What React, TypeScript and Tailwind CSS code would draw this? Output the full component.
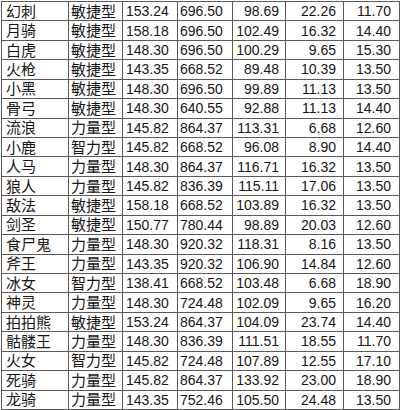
const ROWS: string[][] = [
  ['幻刺', '敏捷型', '153.24', '696.50', '98.69', '22.26', '11.70'],
  ['月骑', '敏捷型', '158.18', '696.50', '102.49', '16.32', '14.40'],
  ['白虎', '敏捷型', '148.30', '696.50', '100.29', '9.65', '15.30'],
  ['火枪', '敏捷型', '143.35', '668.52', '89.48', '10.39', '13.50'],
  ['小黑', '敏捷型', '148.30', '696.50', '99.89', '11.13', '13.50'],
  ['骨弓', '敏捷型', '148.30', '640.55', '92.88', '11.13', '14.40'],
  ['流浪', '力量型', '145.82', '864.37', '113.31', '6.68', '12.60'],
  ['小鹿', '智力型', '145.82', '668.52', '96.08', '8.90', '14.40'],
  ['人马', '力量型', '148.30', '864.37', '116.71', '16.32', '13.50'],
  ['狼人', '力量型', '145.82', '836.39', '115.11', '17.06', '13.50'],
  ['敌法', '敏捷型', '158.18', '668.52', '103.89', '16.32', '13.50'],
  ['剑圣', '敏捷型', '150.77', '780.44', '98.89', '20.03', '12.60'],
  ['食尸鬼', '力量型', '148.30', '920.32', '118.31', '8.16', '13.50'],
  ['斧王', '力量型', '143.35', '920.32', '106.90', '14.84', '12.60'],
  ['冰女', '智力型', '138.41', '668.52', '103.48', '6.68', '18.90'],
  ['神灵', '力量型', '148.30', '724.48', '102.09', '9.65', '16.20'],
  ['拍拍熊', '敏捷型', '153.24', '864.37', '104.09', '23.74', '14.40'],
  ['骷髅王', '力量型', '148.30', '836.39', '111.51', '18.55', '11.70'],
  ['火女', '智力型', '145.82', '724.48', '107.89', '12.55', '17.10'],
  ['死骑', '力量型', '145.82', '864.37', '133.92', '23.00', '18.90'],
  ['龙骑', '力量型', '143.35', '752.46', '105.50', '24.48', '13.50'],
]

// per-column alignment/padding, like the spreadsheet it came from
const CELL = [
  'justify-start pl-[4px] text-[15px]',
  'justify-start pl-[2px] text-[15px]',
  'justify-start pl-[3px] text-[14px]',
  'justify-start pl-[2px] text-[14px]',
  'justify-end pr-[6px] text-[14px]',
  'justify-end pr-[7px] text-[14px]',
  'justify-end pr-[8px] text-[14px]',
]

export default function App() {
  return (
    <div className="w-[400px] h-[410px] overflow-hidden bg-white">
      <div
        className="ml-px mt-px h-[409px] w-[399px] grid gap-px p-px bg-[#5a5a5a] grid-cols-[66px_53px_54px_54px_52px_57px_55px] grid-rows-[repeat(21,minmax(0,1fr))]"
        style={{ fontFamily: '"Liberation Sans", "Noto Sans CJK SC", sans-serif' }}
      >
        {ROWS.map((row, i) =>
          row.map((cell, j) => (
            <div
              key={`${i}-${j}`}
              className={`bg-white flex items-center overflow-visible whitespace-nowrap leading-none text-[#161616] ${CELL[j]}`}
            >
              {cell}
            </div>
          )),
        )}
      </div>
    </div>
  )
}
